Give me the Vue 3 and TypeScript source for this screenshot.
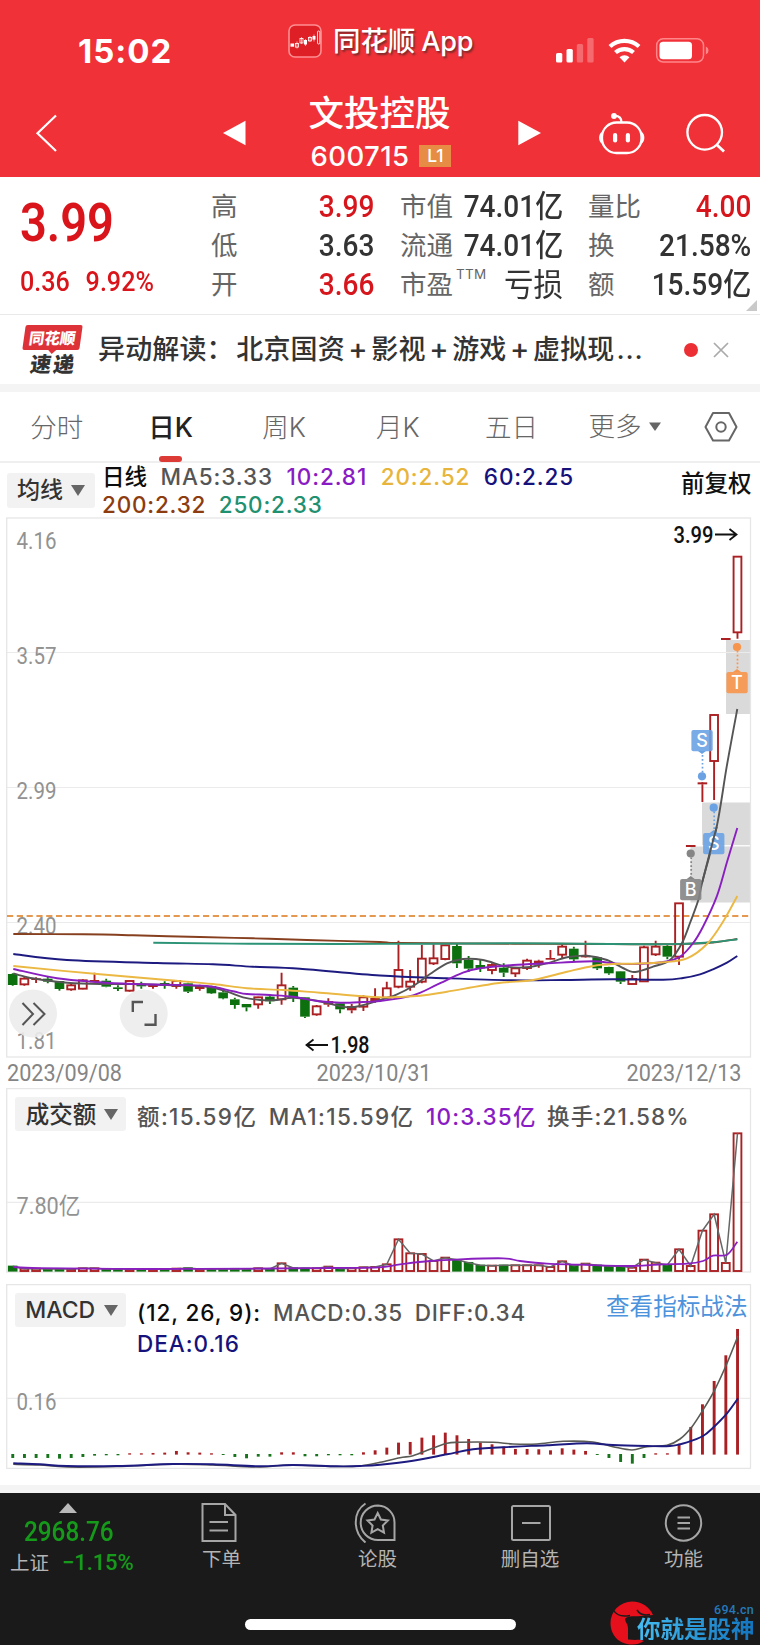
<script setup lang="ts">
type Point = [number, number]
// kind, body top, body bottom, wick top, wick bottom
type Candle = ['r' | 'h' | 'g', number, number, number, number]

const STEP = 11.69
const FIRST = 12.7
const BODY = 9.6
const xAt = (i: number): number => FIRST + STEP * i

// Prices are kept in thirds of a pixel below y = 900.
const candles: Candle[] = [
  ['g', 222, 255, 220, 257], ['h', 236, 253, 230, 257], ['r', 235, 240, 232, 249], ['g', 236, 245, 230, 250],
  ['g', 243, 267, 243, 272], ['h', 256, 268, 252, 272], ['h', 241, 266, 238, 268], ['r', 240, 247, 218, 248],
  ['g', 242, 260, 236, 262], ['g', 262, 267, 256, 273], ['h', 243, 272, 243, 275], ['g', 251, 259, 245, 266],
  ['r', 254, 261, 252, 266], ['g', 249, 258, 244, 266], ['h', 243, 258, 242, 266], ['g', 250, 275, 248, 279],
  ['r', 257, 267, 254, 272], ['g', 258, 280, 257, 282], ['g', 277, 295, 272, 298], ['g', 298, 315, 293, 326],
  ['g', 312, 322, 312, 334], ['h', 292, 313, 290, 326], ['g', 290, 304, 285, 312], ['h', 256, 298, 218, 314],
  ['g', 263, 292, 258, 306], ['g', 292, 350, 291, 354], ['h', 319, 343, 315, 347], ['r', 303, 314, 295, 320],
  ['g', 310, 328, 308, 340], ['r', 318, 331, 312, 340], ['h', 292, 320, 286, 333], ['r', 294, 305, 265, 308],
  ['h', 265, 293, 245, 294], ['h', 210, 260, 122, 265], ['h', 245, 260, 210, 272], ['h', 176, 245, 135, 250],
  ['h', 175, 190, 133, 195], ['h', 136, 177, 134, 181], ['g', 138, 190, 132, 204], ['g', 180, 206, 168, 216],
  ['g', 195, 205, 177, 216], ['h', 195, 210, 190, 223], ['g', 203, 218, 190, 231], ['h', 205, 220, 203, 231],
  ['h', 182, 204, 176, 210], ['r', 182, 193, 179, 203], ['r', 174, 179, 150, 180], ['h', 140, 164, 133, 174],
  ['g', 146, 178, 140, 183], ['r', 167, 172, 122, 173], ['g', 172, 205, 171, 210], ['g', 201, 220, 200, 224],
  ['g', 214, 245, 213, 252], ['h', 237, 252, 225, 253], ['h', 142, 244, 137, 246], ['h', 140, 163, 122, 168],
  ['g', 138, 170, 136, 178], ['h', 10, 170, 9, 195], ['r', -165, -159, -165, -159], ['r', -353, -347, -350, -294],
  ['h', -555, -417, -557, -300], ['r', -786, -780, -783, -783], ['h', -1030, -803, -1031, -784],
]
const py = (v: number): number => 900 + v / 3

const volumes: number[] = [
  14, 7, 7, 6, 7, 6, 8, 8, 6, 6, 6, 6, 6, 6, 7, 9, 6, 6, 6, 7, 6, 8, 6, 23, 9, 8, 8, 13, 7, 8, 11, 12,
  20, 95, 53, 51, 30, 40, 34, 25, 17, 16, 17, 17, 17, 17, 12, 29, 16, 22, 17, 15, 14, 10, 34, 25, 18, 65, 15, 121, 170, 24, 413,
]
const macd: number[] = [
  -11, -11, -11, -11, -13, -11, -8, -4, -3, -3, 3, 3, 4, 5, 10, 6, 5, 3, -2, -8, -12, -7, -7, 6, 6, -6, -6, -3, -3, -3, 6, 12,
  20, 35, 37, 50, 57, 65, 57, 46, 35, 30, 23, 16, 16, 15, 12, 18, 14, 10, -2, -11, -23, -28, -11, 3, 3, 32, 82, 150, 220, 297, 376,
]

const smooth = (pts: Point[]): string => {
  let d = `M${pts[0][0]} ${pts[0][1]}`
  for (let i = 0; i < pts.length - 1; i++) {
    const a = pts[Math.max(0, i - 1)]
    const b = pts[i]
    const c = pts[i + 1]
    const e = pts[Math.min(pts.length - 1, i + 2)]
    d += `C${(b[0] + (c[0] - a[0]) / 6).toFixed(1)} ${(b[1] + (c[1] - a[1]) / 6).toFixed(1)} ${(c[0] - (e[0] - b[0]) / 6).toFixed(1)} ${(c[1] - (e[1] - b[1]) / 6).toFixed(1)} ${c[0]} ${c[1]}`
  }
  return d
}

const averages: { color: string; d: string }[] = [
  { color: '#86401f', d: smooth([[13.3, 934], [83, 934.3], [133, 935.3], [200, 937], [253, 938.3], [307, 940], [380, 942], [400, 943], [513, 943.7], [613, 944], [663, 944.3], [697, 943.5], [717, 942], [737.3, 939]]) },
  { color: '#2c9377', d: smooth([[153.3, 942.7], [250, 943.7], [380, 943.9], [513, 943.3], [580, 943.7], [653, 944.3], [687, 943.7], [713, 942.3], [737.3, 939.3]]) },
  { color: '#1d1a80', d: smooth([[13.3, 954], [67, 960], [157, 963], [213, 964.3], [253, 966.7], [300, 968.7], [380, 975.5], [447, 978.3], [513, 980.3], [563, 980], [613, 979.3], [663, 979.7], [683, 978], [700, 974.3], [713, 969.3], [727, 962.7], [737.3, 956]]) },
  { color: '#555', d: smooth([[13.3, 973.3], [27, 977.3], [43, 980], [67, 982.7], [100, 984], [133, 984], [167, 985], [207, 986.7], [227, 991.7], [243, 997.3], [260, 1000], [277, 1000], [293, 997.7], [317, 1000.7], [350, 1007.3], [380, 1000], [397, 994.3], [413, 986], [430, 974], [447, 963.3], [463, 959], [483, 960], [507, 966.7], [527, 967.3], [547, 963.3], [567, 957.3], [587, 955.7], [607, 960], [627, 970], [637, 971.7], [653, 966.7], [670, 960], [682, 943], [690, 923], [698.3, 900], [702.3, 882], [716.7, 826.7], [726.7, 766.7], [737.3, 709]]) },
  { color: '#8a1fc0', d: smooth([[13.3, 969], [57, 978.3], [100, 982.3], [133, 984], [167, 984.7], [207, 986], [233, 991.3], [247, 994], [270, 995], [293, 996.7], [317, 1001], [340, 1002.7], [363, 1002], [380, 1001], [413, 995.3], [437, 984.7], [463, 972.7], [480, 968.3], [513, 965], [547, 963.3], [593, 961.3], [613, 963.3], [633, 964], [663, 962], [680, 956.7], [693, 943.3], [703, 926.7], [716.7, 896.7], [727, 862], [737.3, 828]]) },
  { color: '#ebb843', d: smooth([[13.3, 966], [100, 974.3], [167, 980], [213, 984], [247, 988.3], [283, 990], [320, 992.7], [380, 997.3], [420, 995.7], [447, 991.7], [497, 983.3], [533, 980], [567, 971.7], [593, 966], [613, 964], [633, 963.7], [663, 962.3], [687, 958.3], [707, 944], [723, 921.7], [737.3, 896]]) },
]

const volumeLine = 'M' + volumes.map((v, i) => `${xAt(i).toFixed(1)} ${(1271 - v / 3).toFixed(1)}`).join('L')
const volumeMean = smooth([[13.3, 1267], [40, 1268.2], [150, 1269], [270, 1268.5], [330, 1268], [380, 1267.3], [400, 1264.3], [430, 1261], [460, 1259.3], [503, 1258.3], [520, 1261], [547, 1263.7], [580, 1264.7], [633, 1266], [663, 1264.3], [687, 1263.7], [703, 1261], [713, 1255.7], [727, 1254.7], [737.3, 1241.7]])
const diffLine = smooth([[13.3, 1464.3], [40, 1465], [67, 1467], [117, 1466.5], [173, 1464.3], [213, 1465], [260, 1467], [290, 1465], [337, 1466.5], [360, 1466], [380, 1462.3], [400, 1457.7], [413, 1455.7], [430, 1449.3], [447, 1443.3], [460, 1442.3], [493, 1442.3], [513, 1444], [537, 1444], [563, 1441.3], [593, 1442], [613, 1446.7], [632, 1450], [647, 1446.7], [667, 1445.3], [680, 1439], [692, 1426.7], [703, 1410], [715, 1389.3], [727, 1363.3], [738, 1336]])
const deaLine = smooth([[13.3, 1463.3], [40, 1464.3], [67, 1466], [117, 1466], [173, 1464], [213, 1464.3], [260, 1466.3], [293, 1465], [337, 1466.3], [360, 1466], [380, 1464.7], [413, 1460.7], [447, 1454.3], [473, 1449.3], [513, 1446.7], [547, 1445.3], [587, 1443.3], [613, 1445], [647, 1446], [670, 1446], [687, 1442.3], [703, 1436], [713, 1427.7], [727, 1413.3], [738, 1398.3]])

interface Marker { letter: string; color: string; x: number; y: number; dot: number }
const markers: Marker[] = [
  { letter: 'B', color: '#858585', x: 690.7, y: 879, dot: 853.5 },
  { letter: 'S', color: '#6aa2e3', x: 702, y: 730, dot: 776.3 },
  { letter: 'S', color: '#6aa2e3', x: 713.7, y: 833, dot: 807.7 },
  { letter: 'T', color: '#f7954d', x: 737, y: 672, dot: 647 },
]
const leads = markers.map((m) => {
  const below = m.dot > m.y
  const edge = below ? m.y + 21 : m.y
  const tip = below ? edge + 3 : edge - 3
  return { tip, points: `${m.x - 4},${edge} ${m.x},${tip} ${m.x + 4},${edge}` }
})

const priceLabels: { text: string; y: number }[] = [
  { text: '4.16', y: 548.5 }, { text: '3.57', y: 664 }, { text: '2.99', y: 799 }, { text: '2.40', y: 934 }, { text: '1.81', y: 1049 },
]
const tabs: string[] = ['分时', '日K', '周K', '月K', '五日']
</script>

<template>
  <div class="app">
    <header class="top">
      <div class="status">
        <span class="clock">15:02</span>
        <span class="brand">
          <svg class="brand-icon" width="34" height="34" viewBox="0 0 34 34">
            <rect x="1" y="1" width="32" height="32" rx="6" fill="#df1f26" stroke="#ff8f92" stroke-width="1.6" />
            <g fill="#fff"><rect x="2.5" y="19.5" width="3.6" height="3.2" /><rect x="16" y="16" width="3" height="4.5" /><rect x="24.5" y="12" width="3" height="3.6" /></g>
            <g fill="none" stroke="#fff" stroke-width=".8"><rect x="7.5" y="19.5" width="3" height="3.6" /><rect x="12" y="14.5" width="3" height="4.5" /><rect x="20.5" y="13.5" width="3" height="3.4" /><rect x="29.5" y="7" width="2.3" height="13" rx="1" /><path d="M9 17.5V24.5M13.5 13V20M22 12V18M17.5 15V22M26 10.5V17.5" stroke-width=".6" /></g>
          </svg>
          <span class="brand-name">同花顺<i>App</i></span>
        </span>
        <svg class="signals" width="154" height="26" viewBox="555 37 154 26">
          <g fill="#fff"><rect x="556" y="53" width="6.3" height="9.5" rx="1.5" /><rect x="566.5" y="49" width="6.3" height="13.5" rx="1.5" /><g opacity=".28"><rect x="576.8" y="44" width="6.3" height="18.5" rx="1.5" /><rect x="587.3" y="38" width="6.3" height="24.5" rx="1.5" /></g></g>
          <g fill="none" stroke="#fff" stroke-width="4.2"><path d="M610 46.5a21.5 21.5 0 0 1 29 0" /><path d="M615.5 52.5a13.4 13.4 0 0 1 18 0" /></g>
          <path d="M619.5 57.2a7.6 7.6 0 0 1 10 0L624.5 62.5Z" fill="#fff" />
          <rect x="656.7" y="38.8" width="46.8" height="23.2" rx="6.5" fill="none" stroke="#ff878a" stroke-width="1.5" />
          <rect x="659.5" y="41.8" width="32.5" height="17.4" rx="3.5" fill="#fff" />
          <path d="M705.8 46.5a4.3 4.3 0 0 1 0 8Z" fill="#ff878a" />
        </svg>
      </div>
      <nav class="titlebar">
        <svg class="nav-left" width="280" height="68" viewBox="0 99 280 68">
          <path d="M56 115.5 37.5 133.3 56 151" fill="none" stroke="#fff" stroke-width="2.2" />
          <path d="M223 133 245.5 120.8V145.2Z" fill="#fff" />
        </svg>
        <div class="name">
          <strong>文投控股</strong>
          <span class="code"><b>600715</b><em>L1</em></span>
        </div>
        <svg class="nav-right" width="280" height="68" viewBox="480 99 280 68">
          <path d="M518.3 120.8 541 133 518.3 145.2Z" fill="#fff" />
          <g fill="none" stroke="#fff" stroke-width="2.3">
            <rect x="602" y="122.5" width="39.5" height="30.5" rx="14.5" />
            <path d="M621.5 122.5c0-4.5-2-6.7-6.5-6.7" />
            <circle cx="704.7" cy="132.3" r="17.3" /><path d="m716.5 144.5 7.5 7" stroke-width="2.8" />
          </g>
          <path d="M602.5 131.5c-4.5 2-4.5 10.5 0 12.5ZM641 131.5c4.5 2 4.5 10.5 0 12.5Z" fill="#fff" />
          <circle cx="614" cy="116" r="2.9" fill="#fff" /><rect x="613" y="133" width="4.2" height="9.5" rx="2.1" fill="#fff" /><rect x="625.8" y="133" width="4.2" height="9.5" rx="2.1" fill="#fff" />
        </svg>
      </nav>
    </header>

    <section class="quote">
      <div class="price">
        <strong>3.99</strong>
        <span class="delta"><b>0.36</b><b>9.92%</b></span>
      </div>
      <dl>
        <dt>高</dt><dd class="up">3.99</dd>
        <dt>低</dt><dd>3.63</dd>
        <dt>开</dt><dd class="up">3.66</dd>
      </dl>
      <dl>
        <dt>市值</dt><dd>74.01亿</dd>
        <dt>流通</dt><dd>74.01亿</dd>
        <dt>市盈<sup>TTM</sup></dt><dd class="loss">亏损</dd>
      </dl>
      <dl>
        <dt>量比</dt><dd class="up">4.00</dd>
        <dt>换</dt><dd>21.58%</dd>
        <dt>额</dt><dd>15.59亿</dd>
      </dl>
      <svg class="corner" width="11" height="11" viewBox="0 0 11 11"><path d="M11 0V11H0Z" fill="#c9c9c9" /></svg>
    </section>

    <section class="news">
      <div class="badge"><span class="badge-top">同花顺</span><span class="badge-bottom">速递</span></div>
      <p>异动解读：<s>北京国资</s><i>+</i>影视<i>+</i>游戏<i>+</i>虚拟现<u>...</u></p>
      <span class="dot"></span>
      <svg class="close" width="16" height="16" viewBox="0 0 16 16"><path d="m1 1 14 14M15 1 1 15" stroke="#aaa" stroke-width="1.7" /></svg>
    </section>

    <nav class="tabs">
      <span v-for="tab in tabs" :key="tab" :class="{ active: tab === '日K' }">{{ tab }}</span>
      <span class="more">更多<svg width="12" height="9" viewBox="0 0 12 9"><path d="M0 .5H12L6 9Z" fill="#666" /></svg></span>
      <svg class="gear" width="34" height="32" viewBox="0 0 34 32"><path d="M9 2H25L32.5 16 25 29.5H9L1.5 16Z" fill="none" stroke="#666" stroke-width="2" stroke-linejoin="round" /><circle cx="17" cy="16" r="4.7" fill="none" stroke="#666" stroke-width="2" /></svg>
    </nav>

    <section class="legend">
      <button class="picker">均线<svg width="14" height="11" viewBox="0 0 14 11"><path d="M0 0H14L7 11Z" /></svg></button>
      <div class="values">
        <p><b class="black">日线</b><b>MA5:3.33</b><b class="violet">10:2.81</b><b class="amber">20:2.52</b><b class="navy">60:2.25</b></p>
        <p class="second"><b class="brown">200:2.32</b><b class="teal">250:2.33</b></p>
      </div>
      <span class="adjust">前复权</span>
    </section>

    <svg class="chart" width="760" height="571" viewBox="0 517 760 571">
      <g fill="#dadada"><rect x="726" y="640" width="24.5" height="74" /><rect x="702" y="802.5" width="48.5" height="100" /><rect x="690.5" y="846.5" width="12" height="56" /></g>
      <path d="M702 845.8H750" stroke="#fafafa" stroke-width="1.5" />
      <path d="M7 652.5H750M7 787.5H750M7 922.5H750" stroke="#ebebeb" stroke-width="1.2" />
      <rect x="6.7" y="518" width="743.8" height="539" fill="none" stroke="#e6e6e6" stroke-width="1.3" />
      <path d="M7 916H750" stroke="#e5984f" stroke-width="2" stroke-dasharray="6.2 3.6" />
      <g class="axis">
        <text v-for="label in priceLabels" :key="label.text" x="16.5" :y="label.y" textLength="40" lengthAdjust="spacingAndGlyphs">{{ label.text }}</text>
      </g>
      <g v-for="(c, i) in candles" :key="i" :class="c[0] === 'g' ? 'down' : 'rise'">
        <path :d="`M${xAt(i)} ${py(c[3])}V${py(c[1])}M${xAt(i)} ${py(c[2])}V${py(c[4])}`" class="wick" />
        <rect v-if="c[0] === 'h'" :x="xAt(i) - BODY / 2 + 0.9" :y="py(c[1])" :width="BODY - 1.8" :height="(c[2] - c[1]) / 3" class="hollow" />
        <rect v-else :x="xAt(i) - BODY / 2" :y="py(c[1])" :width="BODY" :height="(c[2] - c[1]) / 3" class="solid" />
      </g>
      <path v-for="line in averages" :key="line.color" :d="line.d" fill="none" :stroke="line.color" stroke-width="1.9" />
      <g v-for="(m, i) in markers" :key="'m' + i" :fill="m.color">
        <circle :cx="m.x" :cy="m.dot" r="4.1" />
        <path :d="`M${m.x + 0.5} ${m.dot}V${leads[i].tip}`" :stroke="m.color" stroke-width="1.7" stroke-dasharray="1.7 2.2" />
        <polygon :points="leads[i].points" />
        <rect :x="m.x - 10.6" :y="m.y" width="21.3" height="21.3" rx="2" opacity=".9" />
        <text :x="m.x" :y="m.y + 17.3" class="marker">{{ m.letter }}</text>
      </g>
      <path d="M702.3 882 710 852 716.7 826.7" fill="none" stroke="#555" stroke-width="1.9" />
      <g class="note">
        <text x="673.5" y="542.5" textLength="40" lengthAdjust="spacingAndGlyphs">3.99</text>
        <text x="330.5" y="1053" textLength="39" lengthAdjust="spacingAndGlyphs">1.98</text>
      </g>
      <path d="M715 534.5H736M729.5 529 736.5 534.5 729.5 540M328 1045H307M313.5 1039.500 306.5 1045 313.5 1050.5" fill="none" stroke="#111" stroke-width="1.8" />
      <g><circle cx="33" cy="1013.5" r="24" fill="#ececec" opacity=".9" /><circle cx="143.7" cy="1013.5" r="24" fill="#ececec" opacity=".9" /></g>
      <path d="M22.5 1003 33 1014 22.5 1025M33.5 1003 44.5 1014 33.5 1025" fill="none" stroke="#555" stroke-width="2" />
      <path d="M132.8 1012V1002H143M144.5 1024.8H155.5V1014" fill="none" stroke="#555" stroke-width="2.4" />
      <g class="axis dates">
        <text x="7" y="1081" textLength="115" lengthAdjust="spacingAndGlyphs">2023/09/08</text>
        <text x="316.5" y="1081" textLength="115" lengthAdjust="spacingAndGlyphs">2023/10/31</text>
        <text x="626.5" y="1081" textLength="115" lengthAdjust="spacingAndGlyphs">2023/12/13</text>
      </g>
    </svg>

    <section class="panel amount">
      <svg width="760" height="196" viewBox="0 1088 760 196">
        <rect x="6.7" y="1088.6" width="743.8" height="183.4" fill="none" stroke="#e6e6e6" stroke-width="1.3" />
        <path d="M7 1202.3H750" stroke="#ebebeb" stroke-width="1.2" />
        <g class="axis"><text x="16.5" y="1213.5" textLength="64" lengthAdjust="spacingAndGlyphs">7.80亿</text></g>
        <g v-for="(v, i) in volumes" :key="i" :class="candles[i][0] === 'g' ? 'down' : 'rise'">
          <rect v-if="candles[i][0] === 'g'" :x="xAt(i) - BODY / 2" :y="1271 - v / 3 - 0.7" :width="BODY" :height="v / 3 + 1.3" class="solid" />
          <rect v-else :x="xAt(i) - BODY / 2 + 0.9" :y="1271 - v / 3" :width="BODY - 1.8" :height="v / 3" class="hollow" />
        </g>
        <path :d="volumeLine" fill="none" stroke="#666" stroke-width="1.5" />
        <path :d="volumeMean" fill="none" stroke="#8a1fc0" stroke-width="1.8" />
      </svg>
      <div class="panel-head">
        <button class="picker">成交额<svg width="14" height="11" viewBox="0 0 14 11"><path d="M0 0H14L7 11Z" /></svg></button>
        <div class="values"><p><b>额:15.59亿</b><b>MA1:15.59亿</b><b class="violet">10:3.35亿</b><b class="turnover">换手:21.58%</b></p></div>
      </div>
    </section>

    <section class="panel macd">
      <svg width="760" height="201" viewBox="0 1284 760 201">
        <rect x="6.7" y="1284.6" width="743.8" height="183.8" fill="none" stroke="#e6e6e6" stroke-width="1.3" />
        <path d="M7 1398.3H750" stroke="#ebebeb" stroke-width="1.2" />
        <g class="axis"><text x="16.5" y="1409.5" textLength="40" lengthAdjust="spacingAndGlyphs">0.16</text></g>
        <rect v-for="(v, i) in macd" :key="i" :x="xAt(i) - 1.4" :y="v > 0 ? 1454.3 - v / 3 : 1454" width="2.9" :height="Math.abs(v) / 3 + 0.3" :fill="v > 0 ? '#a82024' : '#17731c'" />
        <path :d="diffLine" fill="none" stroke="#5a5a55" stroke-width="1.6" />
        <path :d="deaLine" fill="none" stroke="#1d1a80" stroke-width="1.9" />
      </svg>
      <div class="panel-head">
        <button class="picker">MACD<svg width="14" height="11" viewBox="0 0 14 11"><path d="M0 0H14L7 11Z" /></svg></button>
        <div class="values">
          <p><b class="black params">(12, 26, 9):</b><b>MACD:0.35</b><b>DIFF:0.34</b></p>
          <p><b class="navy dea">DEA:0.16</b></p>
        </div>
        <a>查看指标战法</a>
      </div>
    </section>

    <footer class="bottom">
      <div class="index">
        <svg width="18" height="10" viewBox="0 0 18 10"><path d="M9 0 18 10H0Z" fill="#b9b9b9" /></svg>
        <strong>2968.76</strong>
        <span>上证<b>−1.15%</b></span>
      </div>
      <div class="action">
        <svg width="44" height="42" viewBox="0 0 44 42"><path d="M5.5 3H28L38.5 14V40H5.5ZM28 3V14H38.5M12.5 21H31M12.5 29.5H31" /></svg><span>下单</span>
      </div>
      <div class="action">
        <svg width="44" height="42" viewBox="0 0 44 42"><path d="M12.5 2.5C-.5 11-.5 31 12.5 41.5M25 4.5a17.3 17.3 0 1 0 0 34.6H41.5V22A17 17 0 0 0 25 4.5Z" /><path d="m24.7 12 3.2 6.5 7 1-5.1 5 1.2 7.1-6.3-3.4-6.3 3.4 1.2-7.1-5.1-5 7-1Z" /></svg><span>论股</span>
      </div>
      <div class="action late">
        <svg width="44" height="42" viewBox="0 0 44 42"><rect x="3" y="5" width="38" height="34" rx="1.5" /><path d="M13 22H31.5" /></svg><span>删自选</span>
      </div>
      <div class="action late">
        <svg width="44" height="42" viewBox="0 0 44 42"><circle cx="21.5" cy="22" r="17.7" /><path d="M15.5 16.5H28M15.5 22H28M15.5 27.5H28" /></svg><span>功能</span>
      </div>
      <div class="home"></div>
      <div class="watermark">
        <svg width="46" height="44" viewBox="0 0 46 44"><path d="M22 .5A21.5 21.5 0 0 0 .5 22C.5 34 9 43.5 22 43.5c5 0 8-1 12-3.5-3-1-5-1.500-8.500-1l-7.500-.5V27c0-4-2.500-5-3-9 3-4 9-2 16-3l12-1C39.500 6 32 .5 22 .5Z" fill="#e60f1c" /><path d="M3 8.500c4 7 10 7.500 17 6M27 9c3 5 8 5.500 13 4.500" fill="none" stroke="#1b1b1b" stroke-width="1.500" /></svg>
        <span class="site">694.cn</span>
        <span class="motto">你就是股神</span>
      </div>
    </footer>
  </div>
</template>

<style>
body { margin: 0; background: #fff; }
</style>

<style scoped>
* { box-sizing: border-box; }
.app { width: 760px; height: 1645px; overflow: hidden; background: #fff; font-family: Inter, "Noto Sans CJK SC", sans-serif; color: #333; }
p, dl, dd { margin: 0; }
i, em, u, s { font-style: normal; text-decoration: none; }
svg { display: block; flex: none; }

.top { height: 177px; background: #f13138; color: #fff; }
.status { height: 88px; display: grid; grid-template-columns: 288px 267px 154px; }
.clock { padding: 31px 0 0 78px; font: 700 33px/40px Inter, sans-serif; letter-spacing: 1px; }
.brand { display: flex; gap: 11px; padding-top: 24px; height: 58px; }
.brand-name { font-size: 27.5px; line-height: 34px; font-weight: 500; letter-spacing: -.1px; white-space: nowrap; text-shadow: 1.5px 2px 2px #7a2a2a; }
.brand-name i { margin-left: 6px; font-size: 27px; }
.signals { margin-top: 37px; }
.titlebar { height: 89px; display: grid; grid-template-columns: 280px 200px 280px; padding-top: 11px; }
.name { display: flex; flex-direction: column; align-items: center; margin-top: -9px; }
.name strong { font-size: 35.5px; line-height: 48px; font-weight: 500; margin-left: -1px; }
.code { display: flex; align-items: center; gap: 10px; margin: 3px -2px 0 0; height: 30px; }
.code b { font-size: 27.5px; font-weight: 500; line-height: 30px; letter-spacing: .4px; }
.code em { width: 32px; height: 22px; background: #e78c45; font: 500 17.5px/22px Inter, sans-serif; text-align: center; }

.quote { position: relative; height: 138px; border-bottom: 1.5px solid #e9e9e9; display: grid; grid-template-columns: 211px 189px 188px 163px; }
.price { padding: 17px 0 0 20px; color: #d9151b; font-family: Roboto, sans-serif; }
.price strong { display: block; font-size: 54px; line-height: 58px; font-weight: 600; transform: scaleX(.87); transform-origin: left; }
.delta { display: flex; gap: 17px; margin-top: 15px; font-size: 27px; line-height: 30px; transform: scaleX(.93); transform-origin: left; }
.delta b { font-weight: 500; }
.quote dl { display: grid; grid-template-columns: 52px 1fr; grid-auto-rows: 39px; padding-top: 10px; align-items: center; }
.quote dl:nth-of-type(1) { padding-right: 26px; }
.quote dl:nth-of-type(2) { padding-right: 25px; }
dt { font-size: 26.5px; color: #666; white-space: nowrap; line-height: 39px; }
dd { justify-self: end; font: 500 30.5px/39px Roboto, "Noto Sans CJK SC", sans-serif; transform: scaleX(.92); transform-origin: right; color: #333; white-space: nowrap; }
dd.up { color: #d6161c; }
dd.loss { font-size: 32px; line-height: 36px; font-weight: 400; }
sup { font: 400 13.5px/10px Inter, sans-serif; vertical-align: 15px; margin-left: 3px; letter-spacing: .3px; }
.corner { position: absolute; right: 3px; bottom: 3px; }

.news { height: 69px; display: flex; align-items: center; padding-left: 24px; }
.badge { width: 57px; margin-right: 17px; text-align: center; }
.badge-top { position: relative; display: block; height: 25px; background: #dd3238; color: #fff; border-radius: 2px; font: 900 15.5px/24px "Noto Sans CJK SC", sans-serif; transform: skewX(-8deg); }
.badge-top::after { content: ""; position: absolute; left: 26px; top: 25px; border: 4px solid transparent; border-top-color: #dd3238; border-bottom: 0; }
.badge-bottom { display: block; color: #333; height: 25px; padding-left: 2px; font: 900 21px/26px "Noto Sans CJK SC", sans-serif; letter-spacing: 2px; transform: skewX(-8deg); }
.news p { width: 586px; font-size: 27px; line-height: 40px; font-weight: 500; letter-spacing: .15px; white-space: nowrap; }
.news s { margin-left: 2.5px; }
.news i { display: inline-block; width: 26.5px; text-align: center; font-weight: 500; font-size: 29px; line-height: 30px; }
.news u { letter-spacing: .8px; margin-left: 2px; }
.dot { width: 14px; height: 14px; border-radius: 50%; background: #ec2f35; }
.close { margin-left: 15px; }

.tabs { height: 79px; border-top: 8px solid #f4f4f4; border-bottom: 2px solid #efefef; display: grid; grid-template-columns: 113.5px 114px 113px 114.5px 113px 113px 79px; align-items: center; }
.tabs span { position: relative; height: 69px; text-align: center; font-size: 26.5px; line-height: 71px; color: #666; font-weight: 300; }
.tabs .active { color: #222; font-weight: 500; }
.tabs .active::after { content: ""; position: absolute; left: 45px; bottom: -1px; width: 23px; height: 6px; border-radius: 3px; background: #dc3b36; }
.tabs .more { display: flex; align-items: center; justify-content: center; gap: 7px; }
.gear { margin-left: 22.5px; }

.legend { height: 54px; display: flex; align-items: flex-start; padding-left: 7px; }
.picker { display: flex; align-items: center; justify-content: center; gap: 8px; border: 0; padding: 0; background: #f2f2f2; border-radius: 3px; height: 35px; width: 88px; color: #333; font: 500 23px/35px Inter, "Noto Sans CJK SC", sans-serif; }
.picker svg { fill: #666; }
.legend .picker { margin-top: 10px; }
.legend .values { width: 579px; margin-left: 7px; }
.values p { display: flex; gap: 13.5px; line-height: 28px; white-space: nowrap; }
.values .second { line-height: 27px; gap: 12.5px; }
.values b { font-size: 22.5px; font-weight: 500; letter-spacing: .9px; color: #555; }
.values .second b { letter-spacing: .8px; }
.values .black { color: #0c0c0c; letter-spacing: 0; }
.values .violet { color: #8a1bc4; }
.values .amber { color: #e8b53c; }
.values .navy { color: #16127c; }
.values .brown { color: #8d3c10; }
.values .teal { color: #1f9170; }
.adjust { font-size: 23.5px; font-weight: 500; line-height: 42px; color: #111; }

.axis text { fill: #929292; font: 400 23px Roboto, "Noto Sans CJK SC", sans-serif; }
.dates text { fill: #858585; }
.note text { fill: #111; font: 500 23px Roboto, sans-serif; }
.marker { fill: #fff; font: 500 18px Inter, sans-serif; text-anchor: middle; }
.rise { stroke: #aa2023; fill: #aa2023; }
.down { stroke: #0c700f; fill: #0c700f; }
.wick { stroke-width: 1.9; }
.hollow { fill: none; stroke-width: 1.9; }
.solid { stroke: none; }

.panel { display: grid; height: 196px; }
.panel > * { grid-area: 1 / 1; }
.macd { height: 209px; border-bottom: 8px solid #f4f4f4; }
.panel-head { display: flex; align-items: flex-start; padding: 9px 0 0 15px; }
.panel-head .picker { width: 111px; height: 34px; gap: 9px; padding-left: 2.5px; }
.amount .picker { font-size: 23.5px; gap: 8px; padding-left: 3px; }
.panel-head .values { margin: 6px 0 0 11px; width: 469px; }
.amount .values p { gap: 11.5px; }
.amount .values b { letter-spacing: 1.4px; }
.amount .values .violet { letter-spacing: 1.2px; }
.amount .values .turnover { letter-spacing: 1.2px; margin-left: -1px; }
.macd .values { margin-top: 4px; }
.macd .values p { line-height: 31px; gap: 12px; }
.macd .values b { letter-spacing: .7px; }
.macd .values .params { letter-spacing: .9px; }
.macd .values .dea { letter-spacing: 1px; }
.panel-head a { font-size: 23.6px; line-height: 28px; color: #4c93dc; white-space: nowrap; }

.bottom { position: relative; height: 152px; background: #1a1a1a; color: #b4b4b4; display: grid; grid-template-columns: 141px 155px 157px 155px 152px; }
.index { display: flex; flex-direction: column; padding-top: 10px; }
.index svg { margin-left: 59px; }
.index strong { margin: 4px 0 0 24px; font: 500 27px/31px Roboto, sans-serif; color: #159a1a; transform: scaleX(.9); transform-origin: left; }
.index span { display: flex; gap: 13px; margin: 1px 0 0 10px; font-size: 19.5px; line-height: 28px; }
.index b { font: 500 22px/27px Roboto, sans-serif; color: #159a1a; letter-spacing: -.1px; }
.action { display: flex; flex-direction: column; align-items: center; padding-top: 8px; font-size: 19.5px; line-height: 33px; }
.action span { margin-left: 6px; }
.late span { margin-left: -1px; }
.action svg { fill: none; stroke: #a6a6a6; stroke-width: 2; }
.home { position: absolute; left: 245px; top: 126px; width: 271px; height: 11px; border-radius: 6px; background: #fff; }
.watermark { position: absolute; left: 610px; top: 108px; width: 150px; height: 44px; }
.site { position: absolute; left: 104px; top: 2px; font: 500 12.5px/13px Roboto, sans-serif; letter-spacing: .3px; color: #2478b8; }
.motto { position: absolute; left: 27px; top: 16px; font: 700 23.5px/23px "Noto Sans CJK SC", sans-serif; white-space: nowrap; background: linear-gradient(90deg, #45bdf2, #1273bd); background-clip: text; color: transparent; }
</style>
